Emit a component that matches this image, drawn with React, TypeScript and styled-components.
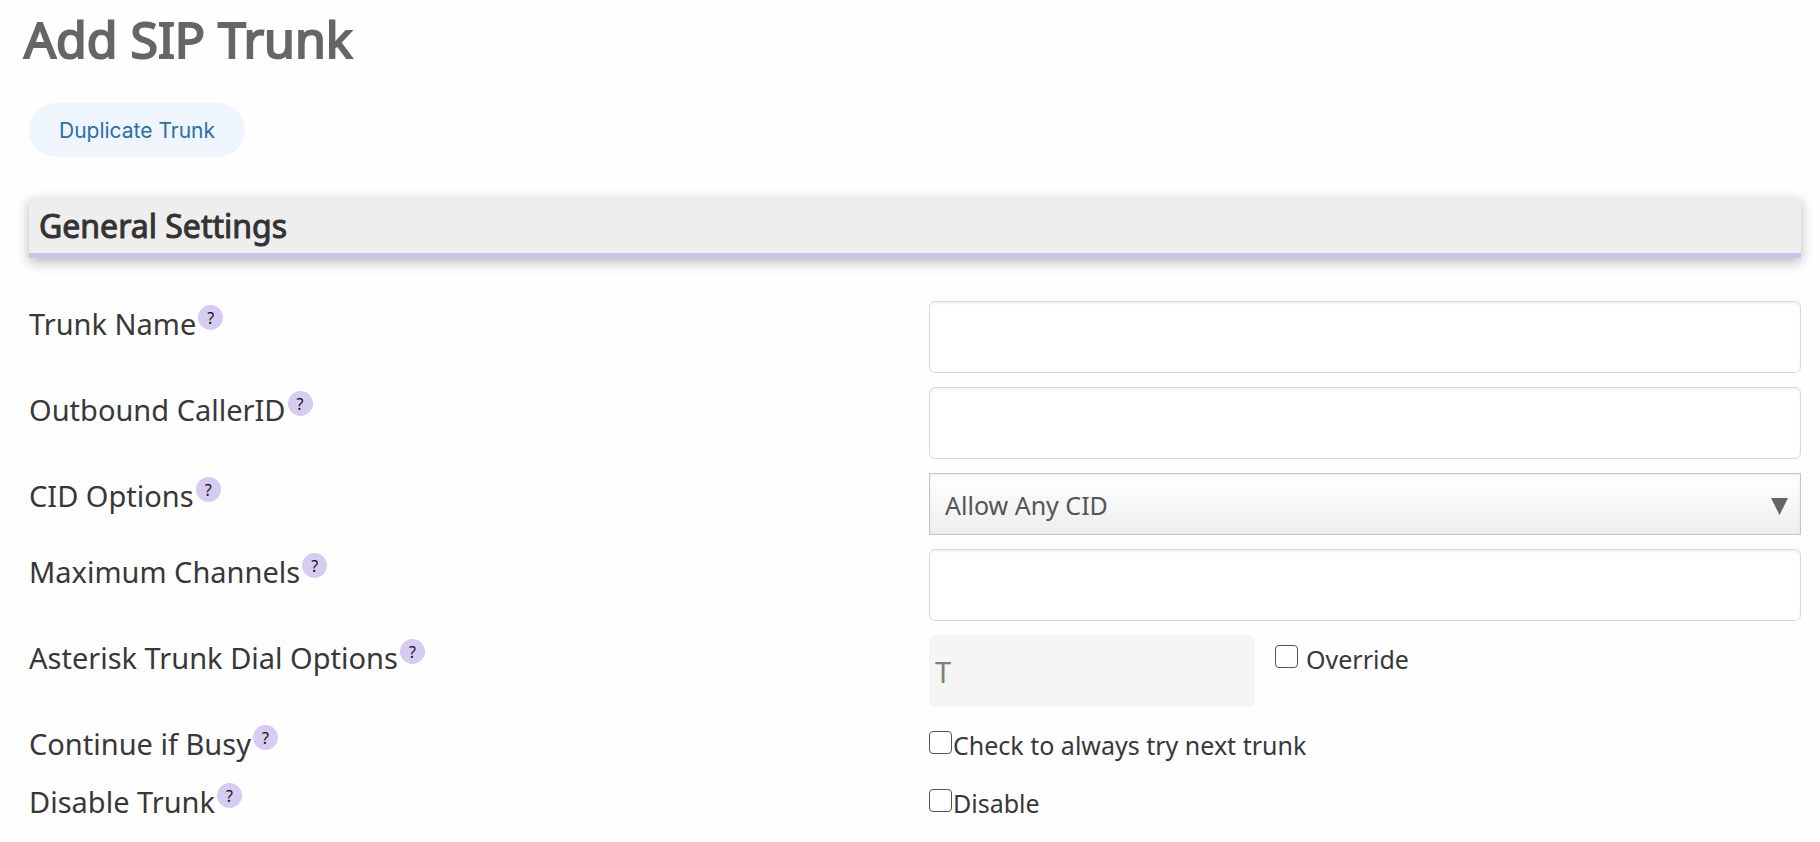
import React, { useState } from "react";
import styled, { createGlobalStyle } from "styled-components";

const GlobalStyle = createGlobalStyle`
  *, *::before, *::after { box-sizing: border-box; }
  body {
    margin: 0;
    background: #fefefe;
    color: #383838;
    font-family: "Noto Sans", "Open Sans", sans-serif;
  }
`;

const Page = styled.main`
  padding: 0 19px 16px 29px;
`;

const Title = styled.h1`
  margin: 0 0 0 -5px;
  padding-top: 4px;
  font-size: 50px;
  line-height: 70px;
  font-weight: 400;
  color: #666;
  -webkit-text-stroke: 2px #666;
`;

const Toolbar = styled.div`
  display: flex;
  margin-top: 29px;
`;

const PillButton = styled.button`
  height: 54px;
  padding: 2px 30px 0;
  border: 0;
  border-radius: 27px;
  background: #eff5fc;
  color: #2a6fa8;
  font-family: Inter, sans-serif;
  font-size: 21px;
  line-height: 28px;
  cursor: pointer;
`;

const SectionTitle = styled.h2`
  margin: 41px 0 43px;
  padding: 6px 10px 5px;
  border-bottom: 5px solid #cbc4e8;
  background: #eee;
  box-shadow: 0 4px 12px rgba(0, 0, 0, 0.28);
  font-size: 32px;
  line-height: 44px;
  font-weight: 400;
  font-variant-ligatures: none;
  color: #333;
  -webkit-text-stroke: 1px #333;
`;

const Form = styled.form`
  display: flex;
  flex-direction: column;
  gap: 14px;
`;

const Row = styled.div`
  display: grid;
  grid-template-columns: 1fr 1fr;
  column-gap: 28px;
  min-height: 44px;
`;

const LabelCell = styled.div`
  display: flex;
  align-items: flex-start;
  gap: 2px;
`;

const FieldLabel = styled.label`
  padding-top: 3px;
  font-size: 29px;
  line-height: 40px;
`;

const HelpBadge = styled.button`
  display: flex;
  align-items: center;
  justify-content: center;
  width: 25px;
  height: 25px;
  margin-top: 4px;
  padding: 0;
  border: 0;
  border-radius: 50%;
  background: #d6cbf0;
  color: #111;
  font-family: inherit;
  font-size: 16px;
  line-height: 24px;
  cursor: help;
`;

const Controls = styled.div`
  display: flex;
  align-items: flex-start;
  gap: 20px;
`;

const TextInput = styled.input<{ $width?: string }>`
  width: ${(p) => p.$width ?? "100%"};
  height: 72px;
  padding: 0 5px;
  border: 1px solid #d9d9d9;
  border-radius: 6px;
  background: #fff;
  box-shadow: inset 0 2px 3px rgba(0, 0, 0, 0.05);
  color: #444;
  font-family: inherit;
  font-size: 29px;

  &:disabled {
    border-color: #f5f5f5;
    background: #f5f5f5;
    box-shadow: none;
    color: #808080;
  }
`;

const SelectWrap = styled.div`
  position: relative;
  width: 100%;
`;

const Select = styled.select`
  display: block;
  width: 100%;
  height: 62px;
  padding: 2px 48px 0 15px;
  appearance: none;
  border: 1px solid #c4c4c4;
  border-radius: 0;
  background: linear-gradient(#fff, #eee);
  box-shadow: inset 0 2px 3px rgba(0, 0, 0, 0.06);
  color: #555;
  font-family: inherit;
  font-size: 25px;
`;

const Arrow = styled.svg`
  position: absolute;
  top: 25px;
  right: 13px;
  width: 17px;
  height: 17px;
  fill: #666;
  pointer-events: none;
`;

const CheckLabel = styled.label<{ $gap: number }>`
  display: flex;
  align-items: flex-start;
  gap: ${(p) => p.$gap}px;
  padding-top: 6px;
  font-size: 25px;
  line-height: 36px;
`;

const Checkbox = styled.input`
  flex: none;
  width: 23px;
  height: 23px;
  margin: 4px 0 0;
  appearance: none;
  border: 1px solid #555;
  border-radius: 4px;
  background: #fff;

  &:checked {
    background: #6b5bb0;
    box-shadow: inset 0 0 0 4px #fff;
  }
`;

function Field({ id, label, children }: { id: string; label: string; children: React.ReactNode }) {
  return (
    <Row>
      <LabelCell>
        <FieldLabel htmlFor={id}>{label}</FieldLabel>
        <HelpBadge type="button" aria-label={`Help: ${label}`}>?</HelpBadge>
      </LabelCell>
      <Controls>{children}</Controls>
    </Row>
  );
}

function Check({ id, text, gap = 1, ...rest }: { id: string; text: string; gap?: number } & React.InputHTMLAttributes<HTMLInputElement>) {
  return (
    <CheckLabel htmlFor={id} $gap={gap}>
      <Checkbox id={id} type="checkbox" {...rest} />
      {text}
    </CheckLabel>
  );
}

export default function App() {
  const [override, setOverride] = useState(false);

  return (
    <>
      <GlobalStyle />
      <Page>
        <Title>Add SIP Trunk</Title>
        <Toolbar>
          <PillButton type="button">Duplicate Trunk</PillButton>
        </Toolbar>
        <SectionTitle>General Settings</SectionTitle>
        <Form>
          <Field id="trunk-name" label="Trunk Name">
            <TextInput id="trunk-name" type="text" />
          </Field>
          <Field id="outcid" label="Outbound CallerID">
            <TextInput id="outcid" type="text" />
          </Field>
          <Field id="keepcid" label="CID Options">
            <SelectWrap>
              <Select id="keepcid" defaultValue="off">
                <option value="off">Allow Any CID</option>
              </Select>
              <Arrow viewBox="0 0 17 17" aria-hidden="true">
                <path d="M0 0h17L8.500 17z" />
              </Arrow>
            </SelectWrap>
          </Field>
          <Field id="maxchans" label="Maximum Channels">
            <TextInput id="maxchans" type="text" />
          </Field>
          <Field id="dialopts" label="Asterisk Trunk Dial Options">
            <TextInput id="dialopts" type="text" $width="326px" defaultValue="T" disabled={!override} />
            <Check
              id="override"
              text="Override"
              gap={8}
              checked={override}
              onChange={(e) => setOverride(e.target.checked)}
            />
          </Field>
          <Field id="continue" label="Continue if Busy">
            <Check id="continue" text="Check to always try next trunk" />
          </Field>
          <Field id="disable" label="Disable Trunk">
            <Check id="disable" text="Disable" />
          </Field>
        </Form>
      </Page>
    </>
  );
}
